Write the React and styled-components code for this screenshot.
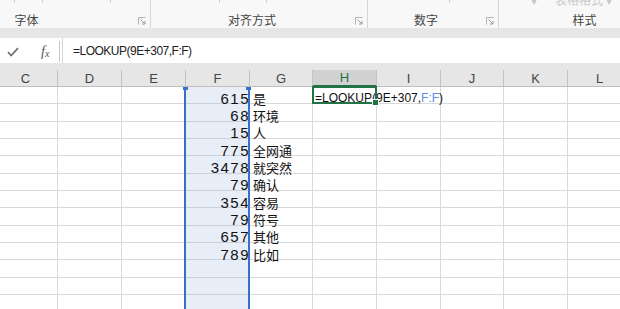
import React from 'react';
import styled, { createGlobalStyle } from 'styled-components';

const GlobalStyle = createGlobalStyle`
  html, body { margin:0; padding:0; background:#fff; }
  body { width:620px; height:309px; overflow:hidden; font-family:"Liberation Sans","Noto Sans CJK SC",sans-serif; }
`

const columns = [
  { key: 'C', w: 64 }, { key: 'D', w: 64 }, { key: 'E', w: 64 }, { key: 'F', w: 64 },
  { key: 'G', w: 63 }, { key: 'H', w: 64 }, { key: 'I', w: 64 }, { key: 'J', w: 63 },
  { key: 'K', w: 64 }, { key: 'L', w: 64 },
];

const data = [
  ['615', '是'], ['68', '环境'], ['15', '人'], ['775', '全网通'], ['3478', '就突然'],
  ['79', '确认'], ['354', '容易'], ['79', '符号'], ['657', '其他'], ['789', '比如'],
  ['', ''], ['', ''], ['', ''],
];

const groups = [
  { label: '字体', w: 234, shift: -83 },
  { label: '对齐方式', w: 217 },
  { label: '数字', w: 131 },
  { label: '样式', w: 186, extra: true },
];

function Launcher() {
  return (
    <LauncherIcon width="8" height="8" viewBox="0 0 8 8">
      <path d="M0.5 7.5V0.5H7.5" fill="none" stroke="#b4b4b4" strokeWidth="1" />
      <path d="M2.5 2.5L7 7M7 4V7H4" fill="none" stroke="#9a9a9a" strokeWidth="1" />
    </LauncherIcon>
  );
}

function App() {
  const tracks = columns.map(c => c.w + 'px').join(' ');
  return (
    <>
      <GlobalStyle />
      <Page>
        <Ribbon>
          {groups.map((g, i) => (
            <Group key={i} $w={g.w} $shift={g.shift}>
              {i === 0 && <Ticks><Tick $ml={97} /><Tick $ml={27} /><Tick $ml={67} /></Ticks>}
              {i === 1 && <Ticks><Tick $ml={68} /><Tick $ml={46} /></Ticks>}
              {i === 2 && <Ticks><Tick $ml={81} /></Ticks>}
              {g.extra && <Faded>▾<span>表格格式 ▾</span></Faded>}
              <GroupLabel>{g.label}</GroupLabel>
              <Launcher />
            </Group>
          ))}
        </Ribbon>
        <Band />
        <FormulaBar>
          <FormulaTools>
            <CheckIcon width="12" height="10" viewBox="0 0 12 10">
              <path d="M1 5.2L4.2 8.6L11 1.2" fill="none" stroke="#6f6f6f" strokeWidth="1.7" />
            </CheckIcon>
            <Fx>f<sub>x</sub></Fx>
          </FormulaTools>
          <FormulaInput>=LOOKUP(9E+307,F:F)</FormulaInput>
        </FormulaBar>
        <Band $h={7} />
        <Sheet style={{ gridTemplateColumns: tracks }}>
          {columns.map(c => (
            <ColHead key={c.key} $active={c.key === 'H'}>{c.key}</ColHead>
          ))}
          {data.map((row, r) =>
            columns.map(c => {
              if (c.key === 'F') return <Cell key={r + c.key} $sel><Num>{row[0]}</Num></Cell>;
              if (c.key === 'G') return <Cell key={r + c.key}><Txt>{row[1]}</Txt></Cell>;
              if (c.key === 'H' && r === 0) return (
                <Cell key={r + c.key} $front>
                  <Edit>=LOOKUP(9E+307,<Ref>F:F</Ref>)</Edit>
                  <ActiveBox><FillHandle /></ActiveBox>
                </Cell>
              );
              return <Cell key={r + c.key} />;
            })
          )}
          <Selection>
            <Grip $side="left" /><Grip $side="right" />
          </Selection>
        </Sheet>
      </Page>
    </>
  );
}

const Page = styled.div`
  width:620px;
  height:309px;
  overflow:hidden;
  display:flex;
  flex-direction:column;
`
const Ribbon = styled.div`
  height:28px;
  flex:none;
  display:flex;
  background:#f8f8f8;
  overflow:hidden;
`
const Group = styled.div`
  position:relative;
  flex:none;
  width:${p => p.$w}px;
  margin-left:${p => p.$shift || 0}px;
  height:28px;
  border-right:1px solid #d6d6d6;
  box-sizing:border-box;
  display:flex;
  align-items:flex-end;
  padding-right:14px;
`
const Ticks = styled.div`
  position:absolute;
  top:0;
  left:0;
  display:flex;
`
const Tick = styled.span`
  width:1px;
  height:3px;
  margin-left:${p => p.$ml}px;
  background:#d0d0d0;
`
const Faded = styled.div`
  position:absolute;
  top:-9px;
  left:32px;
  font-size:12px;
  color:#c8c8c8;
  white-space:nowrap;
  span{ margin-left:18px; }
`
const GroupLabel = styled.div`
  flex:1;
  text-align:center;
  font-family:"Noto Sans CJK SC",sans-serif;
  font-size:12px;
  line-height:16px;
  color:#444;
`
const LauncherIcon = styled.svg`
  position:absolute;
  right:4px;
  bottom:3px;
`
const Band = styled.div`
  height:${p => p.$h || 10}px;
  flex:none;
  background:#e6e6e6;
`
const FormulaBar = styled.div`
  height:25px;
  flex:none;
  display:flex;
  background:#fff;
`
const FormulaTools = styled.div`
  width:60px;
  display:flex;
  align-items:center;
  border-right:1px solid #c8c8c8;
  box-sizing:border-box;
  margin:3px 0 1px;
`
const CheckIcon = styled.svg`
  margin-left:7px;
  flex:none;
`
const Fx = styled.span`
  margin-left:22px;
  font-family:"Liberation Serif",serif;
  font-style:italic;
  font-size:14px;
  color:#555;
  sub{ font-size:10px; vertical-align:-1px; }
`
const FormulaInput = styled.div`
  flex:1;
  margin-left:2px;
  border-left:1px solid #d6d6d6;
  padding-left:10px;
  display:flex;
  align-items:center;
  font-size:12px;
  letter-spacing:-0.5px;
  color:#222;
`
const Sheet = styled.div`
  position:relative;
  display:grid;
  grid-template-rows:17px;
  grid-auto-rows:calc(52px / 3);
  margin-left:-6px;
  flex:none;
`
const ColHead = styled.div`
  background:${p => p.$active ? '#d2d2d2' : '#e6e6e6'};
  border-right:1px solid #c3c3c3;
  border-bottom:${p => p.$active ? '2px solid #217346' : '1px solid #bfbfbf'};
  box-sizing:border-box;
  display:flex;
  align-items:center;
  justify-content:center;
  font-size:13px;
  color:${p => p.$active ? '#217346' : '#444'};
`
const Cell = styled.div`
  position:relative;
  box-sizing:border-box;
  padding-top:6px;
  border-right:1px solid #d9d9d9;
  border-bottom:1px solid #d9d9d9;
  background:${p => p.$sel ? '#e8eef8' : 'transparent'};
  display:flex;
  align-items:center;
  z-index:${p => p.$front ? 2 : 'auto'};
  ${p => p.$sel && 'border-bottom-color:#cbd0d8;'}
`
const Num = styled.span`
  flex:1;
  text-align:right;
  margin-right:-1px;
  font-size:15px;
  letter-spacing:1.5px;
  color:#111;
`
const Txt = styled.span`
  padding-left:3px;
  font-family:"Noto Sans CJK SC",sans-serif;
  font-size:13px;
  color:#111;
  white-space:nowrap;
`
const Edit = styled.span`
  padding-left:2px;
  font-size:12px;
  color:#111;
  white-space:nowrap;
`
const Ref = styled.span`
  color:#5b8de6;
`
const ActiveBox = styled.div`
  position:absolute;
  left:-1px;
  top:-1px;
  right:-1px;
  bottom:-1px;
  border:2px solid #217346;
`
const FillHandle = styled.div`
  position:absolute;
  right:-4px;
  bottom:-4px;
  width:5px;
  height:5px;
  background:#217346;
  border:1px solid #fff;
`
const Selection = styled.div`
  position:absolute;
  left:190px;
  width:66px;
  top:17px;
  bottom:0;
  border-left:2px solid #3a6fc8;
  border-right:2px solid #3a6fc8;
  box-sizing:border-box;
  pointer-events:none;
`
const Grip = styled.div`
  position:absolute;
  top:0;
  ${p => p.$side}:-3px;
  width:5px;
  height:3px;
  background:#3a6fc8;
`

export default App
